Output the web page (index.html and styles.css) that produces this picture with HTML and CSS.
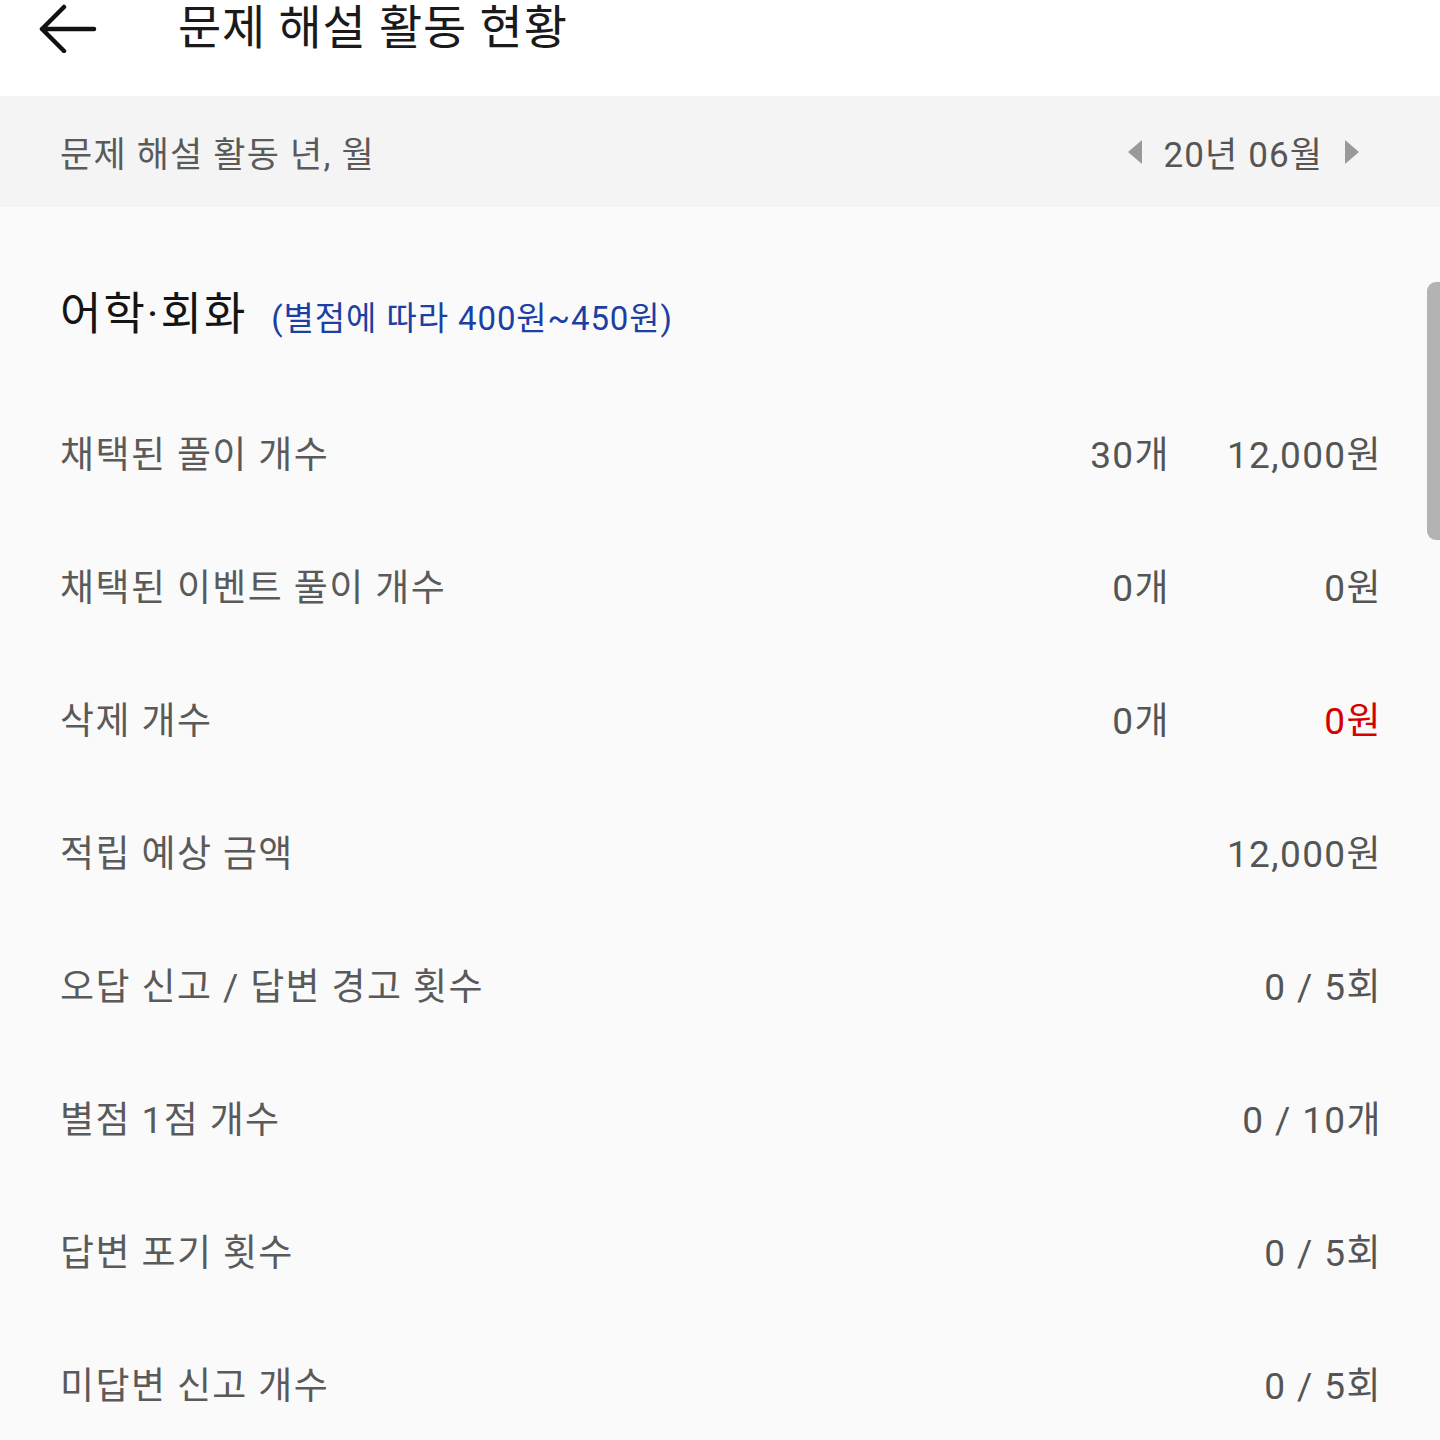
FILE: index.html
```html
<!DOCTYPE html>
<html lang="ko">
<head>
  <meta charset="UTF-8">
  <meta name="viewport" content="width=device-width, initial-scale=1.0">
  <title>문제 해설 활동 현황</title>
  <link rel="stylesheet" href="styles.css">
</head>
<body>
  <header class="topbar">
    <button class="back-btn" aria-label="뒤로">
      <svg width="60" height="50" viewBox="0 0 60 50">
        <path d="M4 26 H56 M26 4 L4 26 L26 48" fill="none" stroke="#111" stroke-width="4.5" stroke-linecap="round" stroke-linejoin="round"/>
      </svg>
    </button>
    <h1>문제 해설 활동 현황</h1>
  </header>

  <div class="period-bar">
    <span class="period-label">문제 해설 활동 년, 월</span>
    <div class="period-nav">
      <span class="tri tri-left"></span>
      <span class="period-value">20년 06월</span>
      <span class="tri tri-right"></span>
    </div>
  </div>

  <main class="content">
    <h2 class="section-title">어학·회화<span class="rate">(별점에 따라 400원~450원)</span></h2>

    <div class="row">
      <span class="label">채택된 풀이 개수</span>
      <span class="count">30개</span>
      <span class="value">12,000원</span>
    </div>
    <div class="row">
      <span class="label">채택된 이벤트 풀이 개수</span>
      <span class="count">0개</span>
      <span class="value">0원</span>
    </div>
    <div class="row">
      <span class="label">삭제 개수</span>
      <span class="count">0개</span>
      <span class="value negative">0원</span>
    </div>
    <div class="row">
      <span class="label">적립 예상 금액</span>
      <span class="value">12,000원</span>
    </div>
    <div class="row">
      <span class="label">오답 신고 / 답변 경고 횟수</span>
      <span class="value">0 / 5회</span>
    </div>
    <div class="row">
      <span class="label">별점 1점 개수</span>
      <span class="value">0 / 10개</span>
    </div>
    <div class="row">
      <span class="label">답변 포기 횟수</span>
      <span class="value">0 / 5회</span>
    </div>
    <div class="row">
      <span class="label">미답변 신고 개수</span>
      <span class="value">0 / 5회</span>
    </div>

    <div class="scroll-thumb"></div>
  </main>
</body>
</html>
```

FILE: styles.css
```css
* {
  box-sizing: border-box;
  margin: 0;
  padding: 0;
}

body {
  font-family: Roboto, "Noto Sans CJK KR", sans-serif;
  background: #fafafa;
  color: #555;
  width: 1440px;
  height: 1440px;
  overflow: hidden;
}

.topbar {
  height: 96px;
  background: #fff;
  display: flex;
  align-items: flex-start;
}

.back-btn {
  background: none;
  border: none;
  width: 178px;
  padding: 3px 0 0 38px;
  text-align: left;
  cursor: pointer;
}

.topbar h1 {
  font-size: 47px;
  font-weight: 400;
  color: #1a1a1a;
  line-height: 56px;
  letter-spacing: 0.8px;
}

.period-bar {
  height: 111px;
  background: #f4f4f4;
  display: flex;
  align-items: center;
  justify-content: space-between;
  padding: 0 81px 0 60px;
}

.period-label {
  font-size: 35px;
  color: #5a5a5a;
  letter-spacing: 1.2px;
}

.period-nav {
  display: flex;
  align-items: center;
  gap: 22px;
}

.period-value {
  font-size: 35px;
  color: #555;
  letter-spacing: 1.1px;
}

.tri {
  width: 0;
  height: 0;
  border-top: 12px solid transparent;
  border-bottom: 12px solid transparent;
}

.tri-left {
  border-right: 14px solid #999;
}

.tri-right {
  border-left: 14px solid #999;
}

.content {
  position: relative;
  padding: 0 58px 0 60px;
}

.section-title {
  font-size: 45px;
  font-weight: 400;
  color: #141414;
  line-height: 56px;
  letter-spacing: 2px;
  padding: 80px 0 38px;
}

.rate {
  font-size: 33px;
  color: #1b3fa3;
  margin-left: 24px;
  letter-spacing: 0.9px;
}

.row {
  height: 133px;
  display: flex;
  align-items: center;
  font-size: 37px;
  letter-spacing: 1.4px;
}

.label {
  flex: 1;
  color: #5a5a5a;
}

.count {
  text-align: right;
}

.value {
  width: 212px;
  text-align: right;
}

.negative {
  color: #d50000;
}

.scroll-thumb {
  position: absolute;
  top: 75px;
  right: 0;
  width: 13px;
  height: 258px;
  background: #b3b3b3;
  border-radius: 9px 0 0 9px;
}
```
